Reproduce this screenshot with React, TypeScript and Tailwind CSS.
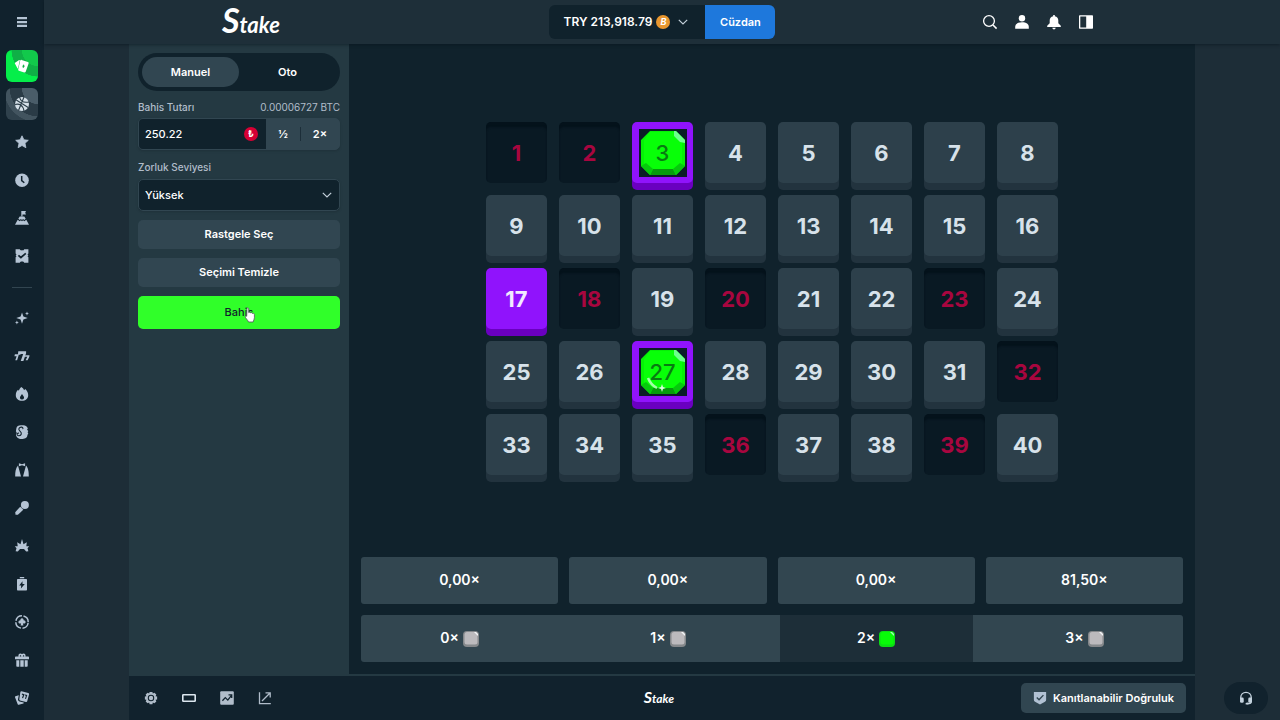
import type { ReactNode } from "react";

type IconProps = { children: ReactNode; className?: string };

function Icon({ children, className = "size-4" }: IconProps) {
  return (
    <svg viewBox="0 0 16 16" fill="currentColor" className={className} aria-hidden="true">
      {children}
    </svg>
  );
}

const cardsIcon = (
  <Icon>
    <path d="M.9 5.600c-.2-.5 0-1 .5-1.200l3.400-2.200c.4-.2.800-.1 1 .2L4.100 10.200c-.2.300-.6.200-.8-.1Z" />
    <path
      fillRule="evenodd"
      d="M7.600 1.900 13.900 4c.6.200.9.800.7 1.400l-2.900 8.400c-.2.600-.8.900-1.400.7L4.900 12.700c-.6-.2-.8-.7-.7-1.300L6.200 2.600c.2-.6.800-.9 1.400-.7Zm2.300 4.300-1.500 1.700.6 2.300 1.600-1.700Z"
    />
  </Icon>
);

const ballIcon = (
  <Icon>
    <circle cx="8" cy="8" r="7" />
    <g fill="none" stroke="#2c3e49" strokeWidth="1.1">
      <path d="M2.300 4 14.200 11.500M10 1 4.500 14.500M1 8.500c4-1 8 0 9 6.500M5.500 1c1 4.500 4.500 6 9.500 5" />
    </g>
  </Icon>
);

const navIcons: { label: string; icon: ReactNode }[] = [
  {
    label: "Favoriler",
    icon: (
      <Icon>
        <path
          d="m8 1.800 1.900 4 4.400.5-3.300 3 .9 4.400L8 11.500l-3.900 2.200.9-4.400-3.300-3 4.400-.5Z"
          stroke="currentColor"
          strokeWidth=".8"
          strokeLinejoin="round"
        />
      </Icon>
    ),
  },
  {
    label: "Son Oynananlar",
    icon: (
      <Icon>
        <circle cx="8" cy="8.200" r="6.800" />
        <path d="M7.700 4v4.600l2.600 2.200" fill="none" stroke="#11222d" strokeWidth="1.500" />
      </Icon>
    ),
  },
  {
    label: "Zorluklar",
    icon: (
      <Icon>
        <path d="M7.300 1H12l-.8 1.700.8 1.700H8.500v2.200H7.300Z" />
        <path d="M5.700 6.500h4.600l1.400 2.200-1.500 1.200-1.100-.8-1.100 1-1.100-1-1.100.8-1.500-1.200Z" />
        <path d="M3.700 9.700l2 1.500 1.200-1 1.100 1 1.100-1 1.200 1 2-1.500 2.700 5.100H1Z" />
      </Icon>
    ),
  },
  {
    label: "Bahislerim",
    icon: (
      <Icon>
        <path d="M1.600 1.200h4.200c.3 1.600 4.100 1.600 4.400 0h4.200v4.400l-.9.9.9.900-.9.900.9.900v5.600h-4.200c-.3-1.600-4.100-1.600-4.400 0H1.600V9.200l.9-.9-.9-.9.9-.9-.9-.9Z" />
        <path d="m4.400 7.300 2.500 2.200 4.900-4.200" fill="none" stroke="#11222d" strokeWidth="1.700" />
      </Icon>
    ),
  },
];

const gameIcons: { label: string; icon: ReactNode }[] = [
  {
    label: "Yeni Çıkanlar",
    icon: (
      <Icon>
        <path d="M8 2.400 9.400 6.600 13.700 8 9.400 9.400 8 13.800 6.600 9.400 2.300 8l4.300-1.400ZM13 1.500l.6 1.400 1.400.6-1.400.6L13 5.500l-.6-1.400-1.400-.6 1.400-.6ZM2.900 10.500l.6 1.400 1.400.6-1.400.6-.6 1.400-.6-1.400-1.400-.6 1.400-.6Z" />
      </Icon>
    ),
  },
  {
    label: "Slotlar",
    icon: (
      <Icon>
        <path d="M4.300 3.300h7.800v2L9.400 13H6.700l2.500-7.100H6.700l-.4.900H3.900Z" />
        <path d="M.9 6.300h3.900l-.3 1.500L3.100 12.200H1.300l1.300-4H.4ZM11.300 7.300h4.200l-.2 1.500-1.700 3.400h-2l1.700-3.400-2.500-.1Z" />
      </Icon>
    ),
  },
  {
    label: "Popüler",
    icon: (
      <Icon>
        <path
          fillRule="evenodd"
          d="M7.200 1c1.700.8 2.500 2 2.800 3.300L11.300 3c2 1.700 2.900 4 2.900 6.200 0 3.300-2.600 5.600-6.200 5.600S1.800 12.500 1.800 9.200c0-2 .6-3.900 2.200-5.400l.8.900C5.200 3.300 6 2 7.200 1Zm.8 7-1.700 2.400c-.9 1.400-.1 3 1.700 3s2.600-1.600 1.700-3Z"
        />
      </Icon>
    ),
  },
  {
    label: "Stake Özel",
    icon: (
      <Icon>
        <path d="M8 1.300c3-.6 5.400 1 5.800 3.400l-.8 1 1.300 1.200-.7 1.300.7 1.400-.9 1.400c.2 2.200-2.100 4-5 3.900-3.700.3-6.400-1.600-6.400-4.500l.8-1.500-.9-1.600.5-3C2.700 2 5 .9 8 1.300Z" />
        <path
          d="M8.900 4.600c.4-1.600-2.700-2.200-3.900-.2-1.300 2.300 3.100 2.900 2.300 5.600-.6 2-3.800 2.300-4.200.5-.2-1 .6-1.500 1.500-1.400"
          fill="none"
          stroke="#11222d"
          strokeWidth="1.100"
          strokeLinecap="round"
        />
      </Icon>
    ),
  },
  {
    label: "Canlı Casino",
    icon: (
      <Icon>
        <path d="M4.900 1.200 8 2.200l3.100-1v3L8 3.200l-3.100 1Z" />
        <path d="M4 3.600 7 14.500H1.200c0-4 .3-8.400 2.800-10.900ZM12 3.600 9 14.500h5.800c0-4-.3-8.400-2.800-10.900Z" />
      </Icon>
    ),
  },
  {
    label: "Oyun Şovları",
    icon: (
      <Icon>
        <circle cx="10.900" cy="4.900" r="4" />
        <path d="M6.200 6.700 9.300 9.700 3.900 14.700H1.500L1.200 12.300Z" />
      </Icon>
    ),
  },
  {
    label: "Burst Oyunları",
    icon: (
      <Icon>
        <path d="m8 1 1.500 5.200L12.800 4.300l-.5 3.900 2.900.1-1.700 2 .9 3-2.200.2L10 10.900H6l-2.200 2.600-2.200-.2.900-3-1.700-2 2.900-.1-.5-3.900 3.300 1.900Z" />
      </Icon>
    ),
  },
  {
    label: "Bonus Alımı",
    icon: (
      <Icon>
        <path d="M5.800 1h4.400v1.300H5.800Z" />
        <path
          fillRule="evenodd"
          d="M4 3h8c.6 0 1 .4 1 1v9.500c0 .6-.4 1-1 1H4c-.6 0-1-.4-1-1V4c0-.6.4-1 1-1Zm4.500 2.300L5.200 9.500h2l-.3 3 3.900-4.400H8.500Z"
        />
      </Icon>
    ),
  },
  {
    label: "Masa Oyunları",
    icon: (
      <Icon>
        <circle
          cx="8"
          cy="8"
          r="6.200"
          fill="none"
          stroke="currentColor"
          strokeWidth="1.500"
          strokeDasharray="8.140 1.600"
          strokeDashoffset="-.8"
        />
        <path d="M8 4.200c1.200 0 1.800 1 1.500 2 1.300-.1 2.100.8 2.100 1.800 0 1.500-1.600 2-2.700 1.300l.5 2.100H6.600l.5-2.100C6 10 4.400 9.500 4.400 8c0-1 .8-1.900 2.100-1.800-.3-1 .3-2 1.500-2Z" />
      </Icon>
    ),
  },
  {
    label: "Promosyonlar",
    icon: (
      <Icon>
        <path
          fillRule="evenodd"
          d="M4.500 4.500C4 2 6 .5 8 2c2-1.500 4 0 3.500 2.500h2.700c.5 0 .8.300.8.800v1.900H1V5.300c0-.5.300-.8.800-.8Zm1.300 0h1.500c0-1.300-1.500-2-1.500 0Zm3 0h1.500c0-2-1.500-1.300-1.500 0Z"
        />
        <path d="M2.300 8.200h3v6.500h-2c-.6 0-1-.4-1-1Zm4 0h3.400v6.500H6.300Zm4.400 0h3v5.500c0 .6-.4 1-1 1h-2Z" />
      </Icon>
    ),
  },
  {
    label: "Blackjack",
    icon: (
      <Icon>
        <path d="m1.400 6.200 3.400-1-.8 4c-.2 1 .5 1.900 1.500 2.200l4.300 1-.3 1-4.700 1.400c-.5.1-.9-.1-1.100-.6L1 7.200c-.1-.4 0-.9.4-1Z" />
        <path
          fillRule="evenodd"
          d="m7.500 1.300 6.800 1.800c.6.200.9.700.8 1.200l-1.900 7c-.1.500-.6.800-1.200.7l-6-1.600c-.5-.2-.8-.700-.7-1.200L6.400 2c.1-.5.600-.8 1.100-.7ZM8 3.500l-.2 1.200 1.200.3-1 2.900 1.100.3 1.500-4Zm3.100 1-.2 1 1 .3-.9 2.900 1 .2 1.300-3.800Z"
        />
      </Icon>
    ),
  },
];

const headerIcons: { label: string; icon: ReactNode }[] = [
  {
    label: "Ara",
    icon: (
      <Icon>
        <path d="m11 11 3.600 3.600" stroke="currentColor" strokeWidth="1.500" />
        <circle cx="7" cy="7" r="5.400" fill="none" stroke="currentColor" strokeWidth="1.300" />
      </Icon>
    ),
  },
  {
    label: "Profil",
    icon: (
      <Icon>
        <circle cx="8" cy="4.300" r="3.200" />
        <path d="M1.200 14.800v-1.900c0-2.700 2.400-4.600 6.800-4.600s6.800 1.900 6.800 4.600v1.900Z" />
      </Icon>
    ),
  },
  {
    label: "Bildirimler",
    icon: (
      <Icon>
        <path d="M7.200 1h1.600v1.300c2.300.4 3.500 2.100 3.500 4.200v2.800l2.500 2.500v1.300H1.200v-1.300l2.500-2.500V6.500c0-2.100 1.200-3.800 3.500-4.200ZM6.300 13.800h3.400c-.2 1.200-.9 1.700-1.700 1.700s-1.500-.5-1.700-1.700Z" />
      </Icon>
    ),
  },
  {
    label: "Kenar Panel",
    icon: (
      <Icon>
        <path
          fillRule="evenodd"
          d="M2 1.200h12c.6 0 1 .4 1 1v11.600c0 .6-.4 1-1 1H2c-.6 0-1-.4-1-1V2.200c0-.6.400-1 1-1Zm.3 1.400v10.800h5.900V2.600Z"
        />
      </Icon>
    ),
  },
];

const footerIcons: { label: string; icon: ReactNode }[] = [
  {
    label: "Ayarlar",
    icon: (
      <Icon className="size-3.5">
        <path
          fillRule="evenodd"
          d="M6.400 1h3.200l.5 1.800 1.800-.9 2.200 2.200-.9 1.800 1.800.5v3.200l-1.800.5.9 1.800-2.200 2.200-1.800-.9-.5 1.800H6.400l-.5-1.800-1.800.9-2.200-2.200.9-1.800L1 9.600V6.400l1.800-.5-.9-1.800 2.200-2.200 1.800.9ZM8 4.300a3.700 3.700 0 1 0 0 7.400 3.700 3.700 0 0 0 0-7.400Zm0 1.200a2.500 2.500 0 1 1 0 5 2.500 2.500 0 0 1 0-5Z"
        />
      </Icon>
    ),
  },
  {
    label: "Sinema Modu",
    icon: (
      <Icon>
        <rect x="1.800" y="4.700" width="12.400" height="6.600" rx=".6" fill="none" stroke="#dce6ee" strokeWidth="1.600" />
      </Icon>
    ),
  },
  {
    label: "Canlı İstatistikler",
    icon: (
      <Icon>
        <rect x="1.200" y="1.200" width="13.600" height="13.600" rx="1" />
        <path d="m3.400 10.800 2.900-3.200 2.500 2.500 3.700-4.800M9.500 4.800h3.200v3.200" fill="none" stroke="#11222d" strokeWidth="1.300" />
      </Icon>
    ),
  },
  {
    label: "Yeni Pencerede Aç",
    icon: (
      <Icon>
        <path d="M2.500 2.300v11.300h11.300M5 11l7.800-7.800M8.500 2.900h4.700v4.700" fill="none" stroke="currentColor" strokeWidth="1.300" />
      </Icon>
    ),
  },
];

function Chevron() {
  return (
    <svg viewBox="0 0 10 10" className="size-2.5 text-[#c3d0da]" aria-hidden="true">
      <path d="m.8 2.800 4.200 4.200 4.200-4.200" fill="none" stroke="currentColor" strokeWidth="1.200" />
    </svg>
  );
}

function Gem({ className }: { className: string }) {
  return (
    <svg viewBox="0 0 44 44" className={className} aria-hidden="true">
      <path d="M9 0h26l9 9v26l-9 9H9l-9-9V9Z" fill="#06f006" />
      <path d="M9 1h26l6 8v24l-8 5H11l-8-5V9Z" fill="#08ff08" />
      <path d="m12 38-3 6h26l-3-6Z" fill="#079b0c" />
      <path d="m0 35 9 9 3-6-7-6Z" fill="#07c90d" />
      <path d="m32 38 3 6 9-9-5-3Z" fill="#07c90d" />
      <path d="M33 0h2l9 9v3l-5-1-6-6Z" fill="#6dff8d" />
    </svg>
  );
}

function MiniGem({ active }: { active: boolean }) {
  return (
    <svg viewBox="0 0 16 16" className="size-4" aria-hidden="true">
      <rect width="16" height="16" rx="4" fill={active ? "#0be013" : "#85888b"} />
      <rect x="1.500" y="1" width="13" height="12.500" rx="2.500" fill={active ? "#08fb08" : "#bcbabd"} />
      <path d="M11 1h2l2 2v2Z" fill={active ? "#a0ffb4" : "#f3f6f8"} />
    </svg>
  );
}

const picked = new Set([3, 17, 27]);
const gems = new Set([3, 27]);
const missed = new Set([1, 2, 18, 20, 23, 32, 36, 39]);
const tiles = Array.from({ length: 40 }, (_, i) => i + 1);

function Tile({ n }: { n: number }) {
  const base = "relative flex aspect-square items-center justify-center rounded-[5px] text-[22px] leading-7 font-bold";
  if (missed.has(n)) {
    return (
      <button className={`${base} bg-[#091923] text-[#a8063f] shadow-[inset_0_5px_2px_#04121b]`}>{n}</button>
    );
  }
  if (gems.has(n)) {
    return (
      <button className={`${base} bg-[#9013fc] shadow-[0_7px_0_#6a00c0]`}>
        <span className="grid size-12 place-items-center bg-[#0b1d27]">
          <Gem className="col-start-1 row-start-1 size-11" />
          {n === 27 && (
            <svg viewBox="0 0 44 44" className="col-start-1 row-start-1 size-11" aria-hidden="true">
              <path d="M7 28c2 5 5 8 9 10" fill="none" stroke="#a4ffa8" strokeWidth="2.500" />
              <path d="m21 34 1 3 3 1-3 1-1 3-1-3-3-1 3-1Z" fill="#d8ffda" />
            </svg>
          )}
          <span className="z-10 col-start-1 row-start-1 font-medium text-[#087b12]">{n}</span>
        </span>
      </button>
    );
  }
  if (picked.has(n)) {
    return <button className={`${base} bg-[#9013fc] text-[#f2eaff] shadow-[0_7px_0_#6a00c0]`}>{n}</button>;
  }
  return <button className={`${base} bg-[#2d404b] text-[#d7e2ea] shadow-[0_7px_0_#22333e]`}>{n}</button>;
}

function Wordmark({ large = false }: { large?: boolean }) {
  return large ? (
    <span className="flex items-baseline font-['Lato',sans-serif] text-[22px] leading-9 font-bold text-white italic">
      <span className="text-[34px]">S</span>take
    </span>
  ) : (
    <span className="flex items-baseline font-['Lato',sans-serif] text-[12px] leading-5 font-bold text-white italic">
      <span className="text-[16px]">S</span>take
    </span>
  );
}

export default function App() {
  return (
    <div className="flex min-h-screen bg-[#1d2d37] font-['Inter',sans-serif] text-xs text-white">
      <nav aria-label="Menü" className="flex w-11 shrink-0 flex-col items-center bg-[#11222d] text-[#b5c4d4]">
        <button aria-label="Menüyü aç" className="flex h-11 w-full items-center justify-center">
          <Icon>
            <path d="M3 3h10v2.300H3Zm0 3.900h10v2.300H3Zm0 3.900h10v2.300H3Z" />
          </Icon>
        </button>
        <div className="flex flex-col items-center gap-1.5 pt-1.5">
          <a
            href="#casino"
            aria-label="Casino"
            className="flex size-8 items-center justify-center rounded-md bg-[radial-gradient(circle_at_100%_0%,#12c94b_0_35%,#0fb046_36%_58%,#05ee4a_59%)] text-white"
          >
            {cardsIcon}
          </a>
          <a
            href="#spor"
            aria-label="Spor"
            className="flex size-8 items-center justify-center rounded-md bg-[radial-gradient(circle_at_100%_0%,#4a5d69_0_35%,#2a3b46_36%_62%,#42545f_63%_75%,#2f414c_76%)] text-[#d5e0e8]"
          >
            {ballIcon}
          </a>
          {navIcons.map((item) => (
            <a key={item.label} href="#" aria-label={item.label} className="flex size-8 items-center justify-center">
              {item.icon}
            </a>
          ))}
          <div className="flex h-[18px] items-center">
            <hr className="w-5 border-[#324550]" />
          </div>
          {gameIcons.map((item) => (
            <a key={item.label} href="#" aria-label={item.label} className="flex size-8 items-center justify-center">
              {item.icon}
            </a>
          ))}
        </div>
      </nav>

      <div className="flex min-w-0 flex-1 flex-col">
        <header className="z-10 bg-[#1e2f39] shadow-[0_1px_3px_rgba(5,18,26,0.5)]">
          <div className="mx-auto grid h-11 max-w-[880px] grid-cols-[1fr_auto_1fr] items-center">
            <a href="#" aria-label="Stake" className="justify-self-start">
              <Wordmark large />
            </a>
            <div className="flex h-[34px] text-[12px] font-semibold">
              <button className="flex items-center rounded-l-md bg-[#10222c] pr-[17px] pl-[15px]">
                TRY 213,918.79
                <span className="mr-2 ml-1 flex size-3.5 items-center justify-center rounded-full bg-[#e8962e] text-[9px] font-bold italic">
                  B
                </span>
                <Chevron />
              </button>
              <button className="w-[70px] rounded-r-md bg-[#1e78dc] text-[11px]">Cüzdan</button>
            </div>
            <div className="flex justify-self-end">
              {headerIcons.map((item) => (
                <button key={item.label} aria-label={item.label} className="flex size-8 items-center justify-center">
                  {item.icon}
                </button>
              ))}
            </div>
          </div>
        </header>

        <main className="mx-auto flex w-full max-w-[1066px] flex-1 flex-col">
          <div className="flex flex-1">
            <section className="flex w-[220px] shrink-0 flex-col bg-[#243942] px-[9px] pt-[9px] text-[11px]">
              <div className="flex h-[38px] rounded-full bg-[#10222c] p-1 font-semibold">
                <button className="flex-1 rounded-full bg-[#314651]">Manuel</button>
                <button className="flex-1">Oto</button>
              </div>

              <div className="mt-2 flex justify-between text-[10px] leading-4 text-[#b1bdca]">
                <label htmlFor="amount" className="font-medium">
                  Bahis Tutarı
                </label>
                <span>0.00006727 BTC</span>
              </div>
              <div className="mt-[3px] flex h-8 overflow-hidden rounded-[5px] border border-[#314651] bg-[#314651] font-semibold shadow-sm">
                <div className="flex min-w-0 flex-1 items-center bg-[#10222c] pr-2 pl-1.5">
                  <input
                    id="amount"
                    defaultValue="250.22"
                    className="w-full min-w-0 bg-transparent font-medium outline-none"
                  />
                  <span className="flex size-3.5 shrink-0 items-center justify-center rounded-full bg-[#d60034] text-[9px] font-bold">
                    ₺
                  </span>
                </div>
                <button className="w-[34px]">½</button>
                <div className="my-2 w-px bg-[#1c2e39]" />
                <button className="w-[38px]">2×</button>
              </div>

              <label htmlFor="difficulty" className="mt-[9px] text-[10px] leading-4 font-medium text-[#b1bdca]">
                Zorluk Seviyesi
              </label>
              <div className="mt-1 grid h-8 items-center">
                <select
                  id="difficulty"
                  defaultValue="high"
                  className="col-start-1 row-start-1 h-full w-full appearance-none rounded-[5px] border border-[#314651] bg-[#10222c] px-1.5 font-medium shadow-sm outline-none"
                >
                  <option value="low">Düşük</option>
                  <option value="high">Yüksek</option>
                </select>
                <span className="pointer-events-none col-start-1 row-start-1 mr-2 justify-self-end">
                  <Chevron />
                </span>
              </div>

              <div className="mt-[9px] flex flex-col gap-[9px] font-semibold">
                <button className="h-[29px] rounded-[5px] bg-[#314651]">Rastgele Seç</button>
                <button className="h-[29px] rounded-[5px] bg-[#314651]">Seçimi Temizle</button>
                <button className="relative h-[33px] rounded-[5px] bg-[#30ff29] font-medium text-[#10222c]">
                  Bahis
                  <svg viewBox="0 0 12 16" className="absolute top-[11px] left-[106px] h-4 w-3" aria-hidden="true">
                    <path
                      d="M3 1c.9-.5 1.700 0 1.700 1v3.600c.5-.6 1.600-.5 1.900.3.700-.5 1.600-.2 1.800.5.900-.4 2 .1 2 1.300v3.100c0 1.600-.9 2.600-1.300 4.200H4.500c-.4-1.500-1.900-2.600-3-4.500-.7-1.200.4-2 1.200-1.200Z"
                      fill="#fff"
                      stroke="#52525c"
                      strokeWidth=".8"
                    />
                  </svg>
                </button>
              </div>
            </section>

            <section className="flex min-w-0 flex-1 flex-col border-b-2 border-[#243942] bg-[#10222c] px-3 pb-3">
              <div className="flex flex-1 items-center justify-center pb-1">
                <div className="grid w-full max-w-[572px] grid-cols-8 gap-3">
                  {tiles.map((n) => (
                    <Tile key={n} n={n} />
                  ))}
                </div>
              </div>

              <div className="grid grid-cols-4 gap-[11px] text-[14px] font-semibold">
                {["0,00×", "0,00×", "0,00×", "81,50×"].map((value, i) => (
                  <div key={i} className="flex h-[47px] items-center justify-center rounded-[3px] bg-[#324650]">
                    {value}
                  </div>
                ))}
              </div>

              <div className="mt-[11px] grid grid-cols-4 gap-[11px] rounded-[3px] bg-[#324650] text-[14px] font-semibold">
                {[0, 1, 2, 3].map((hits) => (
                  <div
                    key={hits}
                    className={`flex h-[47px] items-center justify-center gap-1 ${hits === 2 ? "mx-0.5 bg-[#1d2e38]" : ""}`}
                  >
                    {hits}×
                    <MiniGem active={hits === 2} />
                  </div>
                ))}
              </div>
            </section>
          </div>

          <footer className="grid h-11 grid-cols-[1fr_auto_1fr] items-center bg-[#11222d] pr-[9px] pl-[3px]">
            <div className="flex text-[#b1bdca]">
              {footerIcons.map((item) => (
                <button key={item.label} aria-label={item.label} className="flex h-8 w-[38px] items-center justify-center">
                  {item.icon}
                </button>
              ))}
            </div>
            <Wordmark />
            <button className="flex h-[30px] items-center gap-1.5 justify-self-end rounded-[5px] bg-[#314651] px-3 text-[11px] font-semibold">
              <Icon className="size-3.5 text-[#b1c1d3]">
                <path d="M1 1h14v9c0 1-.4 1.700-1.300 2.200L8 15.500l-5.700-3.300C1.400 11.700 1 11 1 10Z" />
                <path d="m4.300 7.500 2.600 2.500 5-5.300" fill="none" stroke="#314651" strokeWidth="1.600" />
              </Icon>
              Kanıtlanabilir Doğruluk
            </button>
          </footer>
        </main>
      </div>

      <button
        aria-label="Canlı Destek"
        className="fixed right-3 bottom-1.5 flex h-8 w-11 items-center justify-center rounded-full bg-[#11222d] text-[#c5d3df]"
      >
        <Icon className="size-3.5">
          <path d="M2 9V7.500C2 4 4.700 1.500 8 1.500S14 4 14 7.500V12c0 1.500-1 2.300-2.500 2.300H9" fill="none" stroke="currentColor" strokeWidth="1.500" />
          <rect x="1.200" y="7.500" width="4.200" height="6" rx="1.500" />
          <rect x="10.600" y="7.500" width="4.200" height="6" rx="1.500" />
          <rect x="7.500" y="13.300" width="3.500" height="2.200" rx="1" />
        </Icon>
      </button>
    </div>
  );
}
